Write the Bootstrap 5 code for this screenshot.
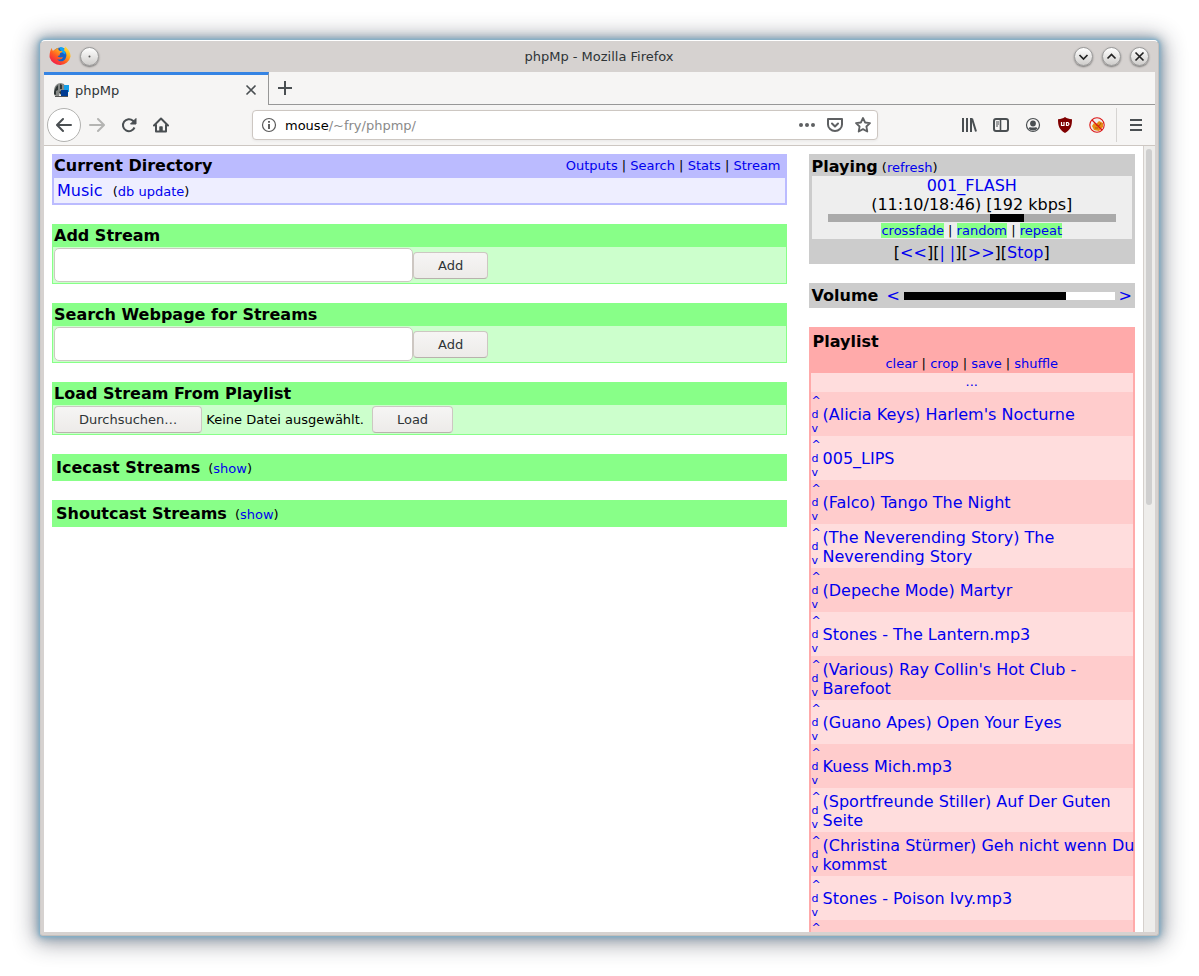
<!DOCTYPE html>
<html lang="de">
<head>
<meta charset="utf-8">
<meta name="viewport" content="width=device-width, initial-scale=1">
<title>phpMp - Mozilla Firefox</title>
<link rel="stylesheet" href="https://cdn.jsdelivr.net/npm/bootstrap@5.3.0/dist/css/bootstrap.min.css">
<style>
  :root { --frame: #d6d2d0; --chrome: #f6f5f4; --ink: #4a4f52; --gap: 19px; }
  body { background: #fff; color: #000; font: 16px/19px "DejaVu Sans", sans-serif; padding: 40px; }
  h1, h2, ol, form { margin: 0; }
  h2 { font-size: 16px; line-height: 19px; font-weight: bold; }
  .fs-note { font-size: 13px; line-height: 17px; }
  main a { color: #00e; text-decoration: none; }
  svg { display: block; flex: none; }

  /* Window frame */
  .window { height: calc(100vh - 80px); background: var(--frame); border: 1px solid #c4bfbc; border-top-color: #fff; border-left-color: #d0ccca; border-radius: 5px 5px 3px 3px; padding: 0 3px 3px;
    box-shadow: 0 0 3px 1px #7fb0cb, 0 0 9px 2px rgba(90,140,170,.6), 0 2px 22px 5px rgba(30,35,50,.45); }
  .titlebar { height: 31px; padding: 0 6px 0 5px; }
  .titlebar h1 { font-size: 13px; line-height: 17px; color: #2e3436; font-weight: normal; }
  .tb-side { width: 80px; }
  .wbtn-gap { gap: 9px; }
  .wbtn { width: 19px; height: 19px; border: 1px solid #999; border-radius: 50%; padding: 0; background: linear-gradient(#fff, #cfcdcb); box-shadow: 0 1px 2px rgba(0,0,0,.45); color: #222; }
  .tool { border: 0; background: none; padding: 0; color: var(--ink); display: grid; place-items: center; width: 32px; height: 32px; }

  /* Tabs and toolbar */
  .tabstrip { height: 33px; background: var(--chrome); color: var(--ink); }
  .tab-on { width: 225px; border-top: 3px solid #3584e4; border-right: 1px solid #979797; padding: 0 11px 0 9px; font-size: 13px; color: #2e3436; }
  .tab-rest { border-bottom: 1px solid #979797; }
  .toolbar { height: 41px; background: var(--chrome); border-bottom: 1px solid #cdc7c2; padding: 0 3px; }
  .back { width: 34px; height: 34px; border: 1px solid #b2b2b0; border-radius: 50%; background: #fff; }
  .urlbar { height: 30px; margin: 0 75px; background: #fff; border: 1px solid #cdc7c2; border-radius: 4px; padding: 0 6px 0 8px; box-shadow: 0 1px 3px rgba(0,0,0,.06); font-size: 13px; }
  .url-path { color: #8a8a8a; }
  .url-icons { gap: 12px; }
  .menu-sep { border-left: 1px solid #d6d4d2; height: 34px; padding-left: 3px; margin-left: 3px; }

  /* Page */
  .viewport { background: #fff; min-height: 0; }
  .page-grid { display: grid; grid-template-columns: minmax(0, 9fr) minmax(0, 4fr); gap: 22px; padding: 8px; align-items: start; }
  .stack { display: grid; gap: var(--gap); }
  .scroll { width: 12px; background: #eeedeb; border-left: 1px solid #d5d0cc; padding: 3px 3px 3px 2px; }
  .thumb { width: 6px; height: 356px; border-radius: 3px; background: #cfcfcf; }

  .dir { background: #eef; border: 2px solid #bbf; }
  .dir header { background: #bbf; height: 22px; padding-right: 4px; }
  .dir header .fs-note { line-height: 19px; }
  .dir-body { height: 25px; padding: 3px; }
  .stream { background: #cfc; border: 1px solid #8f8; }
  .stream header { background: #8f8; height: 22px; padding: 1px; }
  .stream form { padding: 1px; }
  .folded { background: #8f8; height: 27px; padding: 4px; }
  .url-input { width: 359px; max-width: 70%; height: 34px; border: 1px solid #cdc7c2; border-radius: 5px; padding: 4px 8px; }
  .push { height: 27px; border: 1px solid #cdc7c2; border-bottom-color: #b8b2ad; border-radius: 4px; background: linear-gradient(#f6f5f4, #edebe9); color: #2e3436; font-size: 13px; line-height: 17px; padding: 4px 24px; }

  .grey { background: #ccc; }
  .now { padding: 3px 3px 2px; }
  .now-box { background: #eee; }
  .seek { width: 90%; height: 8px; background: #aaa; border-radius: 0; margin: 0 auto; }
  .volbar { height: 8px; background: #fff; border-radius: 0; }
  .on { background: #8f8; }
  .controls { padding: 4px 0 0; }
  .volume { height: 25px; padding: 3px; }
  .playlist { border: 2px solid #faa; background: #faa; }
  .playlist header { height: 44px; padding: 3px 2px 0; }
  .pl-more { background: #fdd; height: 19px; }
  .track { min-height: 44px; background: #fdd; padding: 1px 0 0 1px; }
  .track:nth-child(odd) { background: #fcc; }
  .track-ops { flex: none; width: 11px; font-size: 11px; line-height: 14px; }
  .track-name { margin-right: -3px; }
</style>
<script src="https://cdn.jsdelivr.net/npm/bootstrap@5.3.0/dist/js/bootstrap.bundle.min.js"></script>
</head>
<body>
<div class="window d-flex flex-column">

  <div class="titlebar flex-shrink-0 d-flex align-items-center justify-content-between">
    <div class="tb-side d-flex align-items-center gap-2">
      <svg width="23" height="23" viewBox="0 0 24 24">
        <defs><linearGradient id="fox" x1="1" y1="0" x2=".2" y2="1"><stop offset="0" stop-color="#fff44f"/><stop offset=".35" stop-color="#ffb11f"/><stop offset=".65" stop-color="#ff5a22"/><stop offset="1" stop-color="#f0144f"/></linearGradient></defs>
        <circle cx="12" cy="11" r="8.500" fill="#1660c8"/>
        <path d="M12 2c4 0 6 4 5 8l-3-2-3-4z" fill="#10a5f5"/>
        <path fill="url(#fox)" d="M3 3c0 1 .3 2 1 3l2-1c1-1 2-2 4-2-.6 1-.4 2 1 3l3 .6c0 1.300-1.500 1.400-2.500 1.900l-.5 2.500-2 .5c1 2 4 1.500 5.500 1-1 3-4 3-6 2 2 4 7.500 3 9-1 1.500-3 .5-6-2-8l1.500-4c3 3 5.500 6 5.500 10.500A11.300 11.300 0 0 1 .7 13C.5 10 1 5 3 3z"/>
      </svg>
      <button class="wbtn d-grid" aria-label="Fenstermenü"><svg width="17" height="17"><circle cx="8.500" cy="8.500" r="1" fill="#555"/></svg></button>
    </div>
    <h1>phpMp - Mozilla Firefox</h1>
    <div class="tb-side wbtn-gap d-flex justify-content-end">
      <button class="wbtn d-grid" aria-label="Minimieren"><svg width="17" height="17" fill="none" stroke="#222" stroke-width="1.700"><path d="M4.500 7l4 4 4-4"/></svg></button>
      <button class="wbtn d-grid" aria-label="Maximieren"><svg width="17" height="17" fill="none" stroke="#222" stroke-width="1.700"><path d="M4.500 10.500l4-4 4 4"/></svg></button>
      <button class="wbtn d-grid" aria-label="Schließen"><svg width="17" height="17" fill="none" stroke="#222" stroke-width="1.700"><path d="M4.500 4.500l8 8m0-8l-8 8"/></svg></button>
    </div>
  </div>

  <div class="tabstrip flex-shrink-0 d-flex">
    <div class="tab-on d-flex align-items-center">
      <svg class="me-1" width="18" height="16" viewBox="0 0 18 16"><path d="M1 13V9C1 4 4 1 8 1l3 1 1 3v8H9l-2-3-1 4H3z" fill="#858886"/><path d="M1 10l2-5 2-2v5l-2 1v4l-2-1zM7 2l2 1v4H7zM6 10l2-1v4z" fill="#2f3636"/><path d="M11 3h5v7h-5z" fill="#159fe8"/><path d="M8 8h7v6H8z" fill="#003b91"/><path d="M2 14.500h13" stroke="#555"/></svg>
      <span class="flex-grow-1">phpMp</span>
      <button class="tool w-auto" aria-label="Tab schließen"><svg width="12" height="12" stroke="currentColor" stroke-width="1.600"><path d="M1.500 1.500l9 9m0-9l-9 9"/></svg></button>
    </div>
    <div class="tab-rest flex-grow-1 d-flex align-items-center"><button class="tool" aria-label="Neuer Tab"><svg width="14" height="14" stroke="currentColor" stroke-width="2"><path d="M7 0v14M0 7h14"/></svg></button></div>
  </div>

  <nav class="toolbar flex-shrink-0 d-flex align-items-center" aria-label="Navigation">
    <button class="tool back" aria-label="Zurück"><svg width="16" height="16" fill="none" stroke="currentColor" stroke-width="2" stroke-linecap="round" stroke-linejoin="round"><path d="M15 8H1.500M7 2L1 8l6 6"/></svg></button>
    <button class="tool" aria-label="Vor"><svg width="16" height="16" fill="none" stroke="#b4b4b2" stroke-width="2" stroke-linecap="round" stroke-linejoin="round"><path d="M1 8h13.500M9 2l6 6-6 6"/></svg></button>
    <button class="tool" aria-label="Neu laden"><svg width="16" height="16" fill="none" stroke="currentColor" stroke-width="2"><path d="M13.500 10.500A6 6 0 1 1 12 3.700l1.500 2"/><path d="M15 1.500V7H9.500z" fill="currentColor" stroke-width="1" stroke-linejoin="round"/></svg></button>
    <button class="tool" aria-label="Startseite"><svg width="16" height="16" fill="none" stroke="currentColor" stroke-width="2" stroke-linecap="round" stroke-linejoin="round"><path d="M1 8.500L8 1.500l7 7M3 8v6.500h10V8"/><path d="M7 14v-4h2v4z" fill="currentColor" stroke-width="1.500"/></svg></button>
    <div class="urlbar d-flex align-items-center flex-grow-1">
      <svg width="16" height="16" fill="none" stroke="#5a5a5a"><circle cx="8" cy="8" r="6.500" stroke-width="1.200"/><path d="M8 7v5M8 4v1.800" stroke-width="1.900"/></svg>
      <span class="flex-grow-1 ps-2">mouse<span class="url-path">/~fry/phpmp/</span></span>
      <div class="url-icons d-flex align-items-center">
        <svg width="16" height="16" fill="#5e6062"><circle cx="2" cy="8" r="2"/><circle cx="8" cy="8" r="2"/><circle cx="14" cy="8" r="2"/></svg>
        <svg width="16" height="16" fill="none" stroke="#5e6062" stroke-width="2" stroke-linecap="round" stroke-linejoin="round"><path d="M1 2h14v5.500a7 6.500 0 0 1-14 0zM5 6.500l3 3 3-3"/></svg>
        <svg width="16" height="16" fill="none" stroke="#5e6062" stroke-width="1.800" stroke-linejoin="round"><path d="M8 1l2.100 4.500 4.900.6-3.600 3.400.9 5L8 12.100 3.700 14.500l.9-5L1 6.100l4.900-.6z"/></svg>
      </div>
    </div>
    <button class="tool" aria-label="Bibliothek"><svg width="16" height="16" stroke="currentColor" stroke-width="2"><path d="M2 1v14M6 1v14M10 1v14M11 1.500l4 13"/></svg></button>
    <button class="tool" aria-label="Seitenleiste"><svg width="16" height="16" fill="none" stroke="currentColor"><rect x="1" y="2" width="14" height="12" rx="2" stroke-width="2"/><path d="M7.500 2v12" stroke-width="1.600"/><path d="M3 5h3M3 7h3M3 9h2"/></svg></button>
    <button class="tool" aria-label="Konto"><svg width="16" height="16" fill="currentColor"><circle cx="8" cy="8" r="6.500" fill="none" stroke="currentColor" stroke-width="1.200"/><circle cx="8" cy="6.500" r="2.900"/><path d="M3.500 11.500c1-2 2.500-1 4.500-1s3.500-1 4.500 1A5.500 5.500 0 0 1 8 13.600a5.500 5.500 0 0 1-4.500-2.100z"/></svg></button>
    <button class="tool" aria-label="uBlock"><svg width="16" height="16"><path d="M8 0c2 1.500 4 2 7 2.300C15 9 14 12.500 8 16 2 12.500 1 9 1 2.300 4 2 6 1.500 8 0z" fill="#800000"/><path d="M4.500 5v3.500h2.500V5M9.500 5.500v3h1.500l1-1.500-1-1.500z" fill="none" stroke="#fff" stroke-width="1.200"/></svg></button>
    <button class="tool" aria-label="Cookies blockieren"><svg width="16" height="16"><circle cx="8" cy="8" r="6.600" fill="#eee"/><path d="M3 9l2-3 2 1 3-3 4 2v4l-4 4-5-1z" fill="#e88a14"/><path d="M7 8l3 1 2-3M6 11h3" stroke="#a85b08" fill="none"/><circle cx="8" cy="8" r="7.200" fill="none" stroke="#dc1414" stroke-width="1.100"/><path d="M3 3l10 10" stroke="#dc1414" stroke-width="1.200"/></svg></button>
    <div class="menu-sep d-flex align-items-center"><button class="tool" aria-label="Menü"><svg width="12" height="12" stroke="currentColor" stroke-width="2"><path d="M0 1h12M0 6h12M0 11h12"/></svg></button></div>
  </nav>

  <div class="viewport d-flex flex-grow-1 overflow-hidden">
    <main class="page-grid flex-grow-1">
      <div class="stack">
        <section class="dir">
          <header class="d-flex justify-content-between">
            <h2>Current Directory</h2>
            <div class="fs-note"><a href="#">Outputs</a> | <a href="#">Search</a> | <a href="#">Stats</a> | <a href="#">Stream</a></div>
          </header>
          <div class="dir-body"><a href="#">Music</a>&nbsp; <span class="fs-note">(<a href="#">db update</a>)</span></div>
        </section>

        <section class="stream">
          <header><h2><label for="stream-url">Add Stream</label></h2></header>
          <form class="d-flex align-items-center"><input id="stream-url" class="url-input" type="text"><button class="push" type="button">Add</button></form>
        </section>

        <section class="stream">
          <header><h2><label for="page-url">Search Webpage for Streams</label></h2></header>
          <form class="d-flex align-items-center"><input id="page-url" class="url-input" type="text"><button class="push" type="button">Add</button></form>
        </section>

        <section class="stream">
          <header><h2>Load Stream From Playlist</h2></header>
          <form class="d-flex align-items-center fs-note">
            <label class="push" for="playlist-file">Durchsuchen…</label>
            <input class="visually-hidden" id="playlist-file" type="file">
            <span class="ms-1 me-2">Keine Datei ausgewählt.</span>
            <button class="push" type="button">Load</button>
          </form>
        </section>

        <section class="folded d-flex"><h2>Icecast Streams</h2><span class="fs-note ps-1 pt-1 lh-1 ms-1">(<a href="#">show</a>)</span></section>
        <section class="folded d-flex"><h2>Shoutcast Streams</h2><span class="fs-note ps-1 pt-1 lh-1 ms-1">(<a href="#">show</a>)</span></section>
      </div>

      <div class="stack">
        <section class="grey now">
          <header class="d-flex gap-1 align-items-baseline"><h2>Playing</h2><span class="fs-note">(<a href="#">refresh</a>)</span></header>
          <div class="now-box text-center">
            <div><a href="#">001_FLASH</a></div>
            <div>(11:10/18:46) [192 kbps]</div>
            <div class="progress seek" role="progressbar" aria-label="Position"><div class="bg-black" style="margin-left:56.25%;width:12%"></div></div>
            <div class="fs-note"><a class="on" href="#">crossfade</a> | <a class="on" href="#">random</a> | <a class="on" href="#">repeat</a></div>
          </div>
          <div class="controls text-center">[<a href="#">&lt;&lt;</a>][<a href="#">| |</a>][<a href="#">&gt;&gt;</a>][<a href="#">Stop</a>]</div>
        </section>

        <section class="grey volume d-flex align-items-center">
          <h2 class="me-2">Volume</h2>
          <a href="#">&lt;</a>
          <div class="progress volbar flex-grow-1 mx-1" role="progressbar" aria-label="Volume"><div class="bg-black" style="width:77%"></div></div>
          <a href="#">&gt;</a>
        </section>

        <section class="playlist">
          <header>
            <h2>Playlist</h2>
            <div class="fs-note text-center pt-1"><a href="#">clear</a> | <a href="#">crop</a> | <a href="#">save</a> | <a href="#">shuffle</a></div>
          </header>
          <div class="pl-more fs-note text-center"><a href="#">...</a></div>
          <ol class="list-unstyled" id="tracks"></ol>
        </section>
      </div>
    </main>
    <div class="scroll"><div class="thumb"></div></div>
  </div>
</div>
<script>
  const tracks = ["(Alicia Keys) Harlem's Nocturne", "005_LIPS", "(Falco) Tango The Night", "(The Neverending Story) The Neverending Story", "(Depeche Mode) Martyr", "Stones - The Lantern.mp3", "(Various) Ray Collin's Hot Club - Barefoot", "(Guano Apes) Open Your Eyes", "Kuess Mich.mp3", "(Sportfreunde Stiller) Auf Der Guten Seite", "(Christina Stürmer) Geh nicht wenn Du kommst", "Stones - Poison Ivy.mp3"];
  const row = (ops, name, align) =>
    `<li class="track d-flex align-items-${align}"><div class="track-ops d-flex flex-column">${ops.map(o => `<a href="#">${o}</a>`).join("")}</div><a class="track-name" href="#">${name}</a></li>`;
  document.getElementById("tracks").innerHTML =
    tracks.map(t => row(["^", "d", "v"], t, "center")).join("") + row(["^"], "", "start");
</script>
</body>
</html>
